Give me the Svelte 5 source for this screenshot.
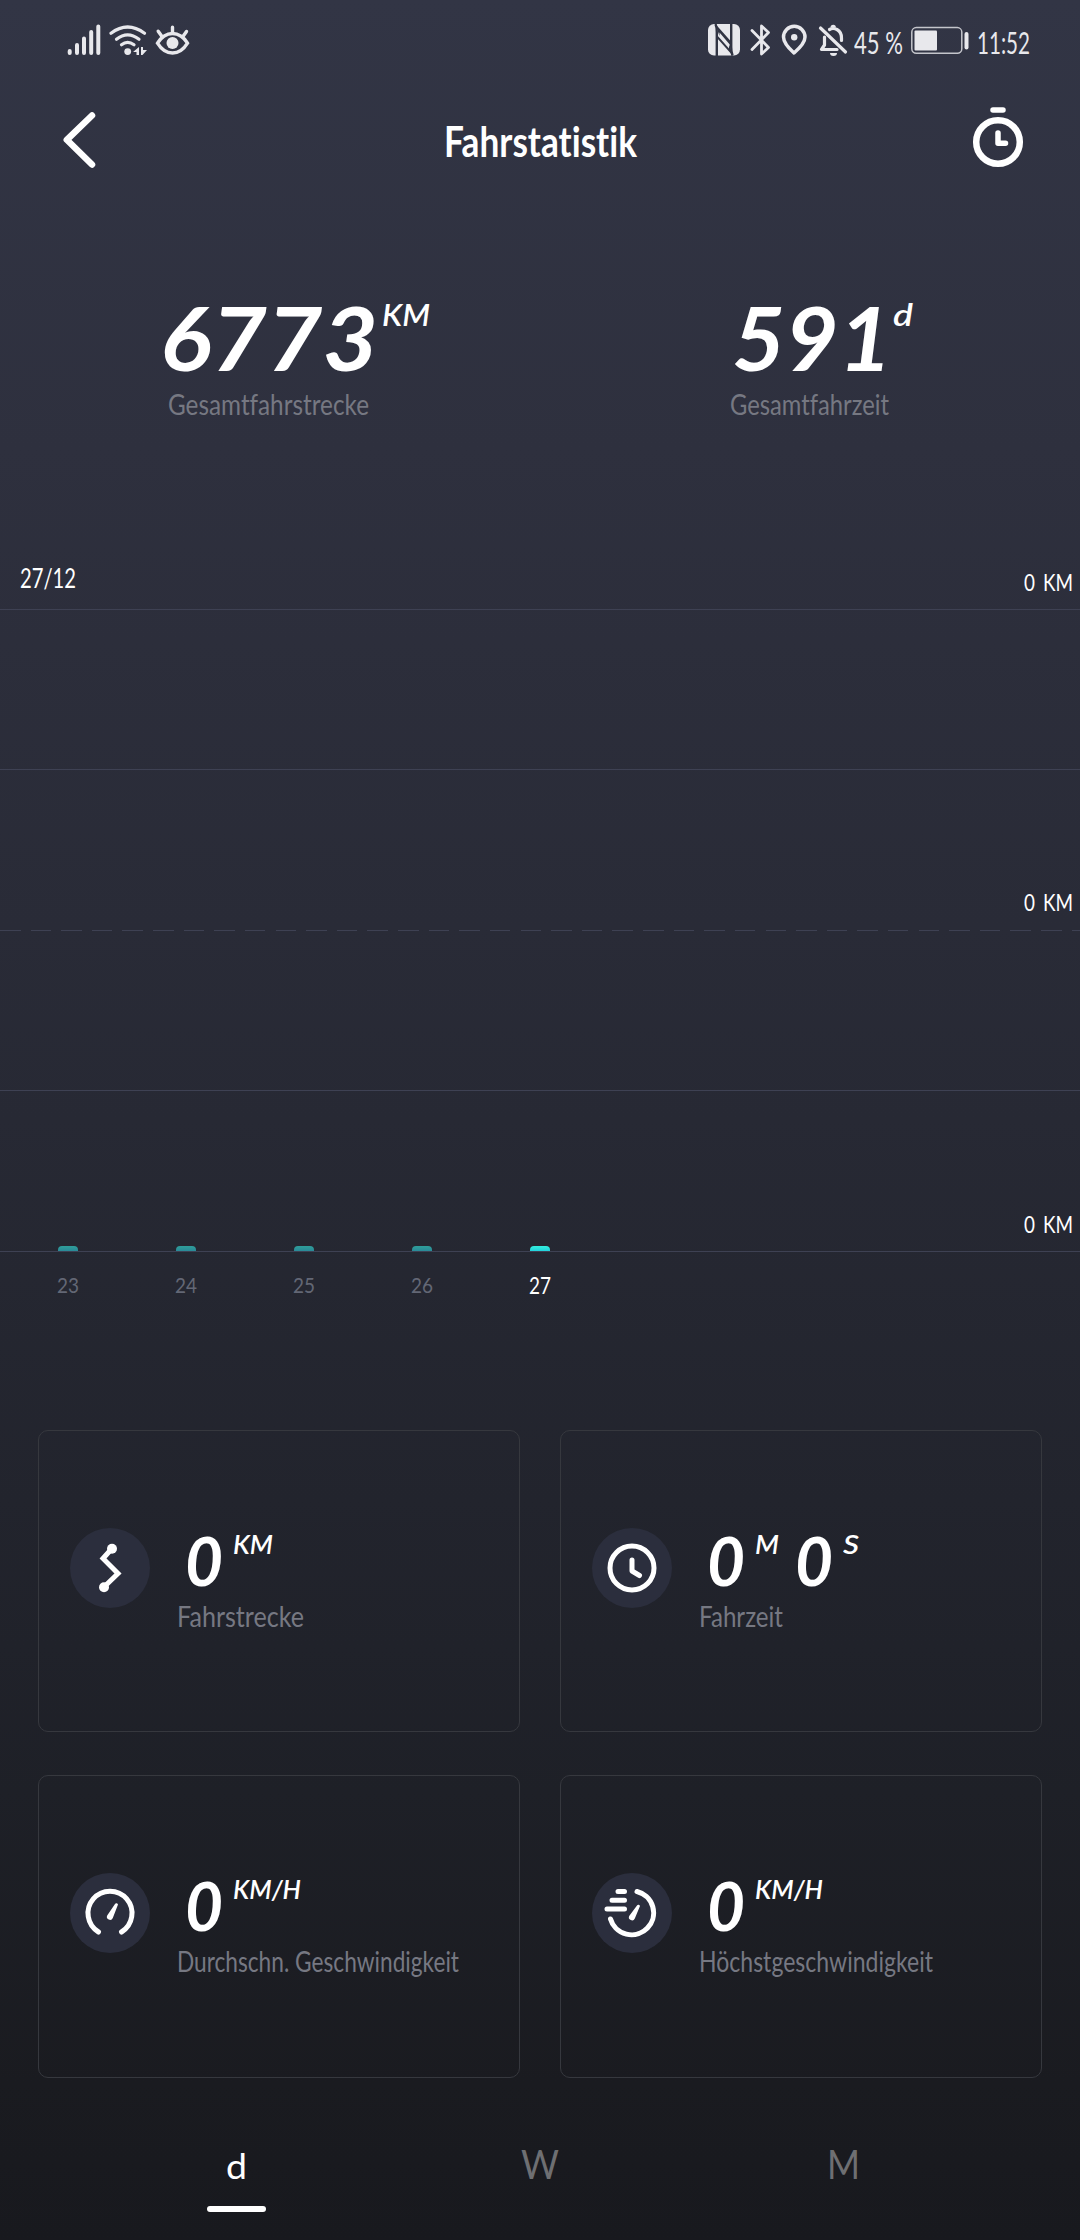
<script>
  // squeezes or stretches a piece of text to the width of the app's display face
  function fit(node, width) {
    const natural = node.getBoundingClientRect().width;
    node.style.transform = `scaleX(${width / natural})`;
    node.style.marginRight = `${width - natural}px`;
  }

  const totals = [
    { value: "6773", width: 218, unit: "KM", unitWidth: 48, label: "Gesamtfahrstrecke", labelWidth: 201 },
    { value: "591", width: 160, unit: "d", unitWidth: 20, label: "Gesamtfahrzeit", labelWidth: 159 },
  ];

  const days = ["23", "24", "25", "26", "27"];
  let selectedDay = "27";

  const cards = [
    { icon: "route", parts: [["KM", 40]], label: "Fahrstrecke", labelWidth: 127 },
    { icon: "clock", parts: [["M", 24], ["S", 16]], label: "Fahrzeit", labelWidth: 84 },
    { icon: "gauge", parts: [["KM/H", 68]], label: "Durchschn. Geschwindigkeit", labelWidth: 282 },
    { icon: "speed", parts: [["KM/H", 68]], label: "Höchstgeschwindigkeit", labelWidth: 234 },
  ];

  const tabs = [
    { name: "d", width: 21 },
    { name: "W", width: 38 },
    { name: "M", width: 33 },
  ];
  let selectedTab = "d";
</script>

<div class="screen">
  <div class="status">
    <svg class="status-left" width="126" height="40" viewBox="66 20 126 40">
      <g stroke="#e8e8ec" stroke-width="4" stroke-linecap="round">
        <path d="M69.700 51v2M77 45v8M84 38.500v14.500M91.200 32v21M98.300 26.500v26.500" />
      </g>
      <g fill="none" stroke="#e8e8ec" stroke-width="3.200" stroke-linecap="round">
        <path d="M111 33.200Q127.500 20.800 144.500 33.200" />
        <path d="M116.500 39.200Q127.500 30.500 139 39.200" />
        <path d="M121.500 44.800Q127.500 40 134 44.800" />
      </g>
      <circle cx="127.700" cy="51.600" r="3.400" fill="#e8e8ec" />
      <path d="M139 47v8h-2.500v-3H133zM141 47h2v3h4l-4.500 5H141z" fill="#e8e8ec" />
      <g fill="none" stroke="#e8e8ec" stroke-width="3.400" stroke-linecap="round">
        <path d="M157.500 43.200Q163.500 33.500 172.500 33.500T187.500 43.200Q181.500 53 172.500 53T157.500 43.200Z" />
        <path d="M172.500 27.200v5M158.200 31.200l3.600 5M186.500 31.500l-3.200 4.500" />
      </g>
      <circle cx="172.500" cy="43" r="6" fill="#e8e8ec" />
    </svg>

    <svg class="status-right" width="144" height="40" viewBox="704 20 144 40">
      <rect x="707" y="24" width="32" height="31.500" rx="6" fill="#e8e8ec" />
      <g fill="none" stroke="#313443" stroke-width="2.400">
        <path d="M714.500 24Q715.800 27 715.800 32V56" />
        <path d="M731.500 55.500Q730.200 52 730.200 47V24" />
      </g>
      <path d="M714 23.500L730 41.500V46L718.500 32.500V36zM732 56L716 38V35L728 48.500V44z" fill="#313443" />
      <path d="M751 30.500L767.500 47.500L760.500 54V26L767.500 32.500L751 49.500" fill="none" stroke="#e8e8ec" stroke-width="2.800" stroke-linejoin="round" stroke-linecap="round" />
      <path d="M793 53Q782.500 43.500 782.500 37A10.700 10.700 0 0 1 804 37Q804 43.500 793 53Z" fill="none" stroke="#e8e8ec" stroke-width="3.500" stroke-linejoin="round" />
      <circle cx="793.200" cy="37.200" r="3.200" fill="#e8e8ec" />
      <g fill="none" stroke="#e8e8ec" stroke-width="3.200" stroke-linecap="round" stroke-linejoin="round">
        <path d="M819.500 28L844.500 52" />
        <path d="M823.500 37v8l-3 4.500H836" />
        <path d="M828.500 29.500Q832 27.500 836 29.500Q840.500 32 840.500 38v2.500" />
      </g>
      <path d="M829.500 27.500a2.700 2.700 0 0 1 5.400 0M829 53h7a3.500 3 0 0 1-7 0z" fill="#e8e8ec" />
    </svg>

    <span class="status-text percent"><span class="fit" use:fit={49}>45 %</span></span>
    <svg class="battery" width="60" height="30" viewBox="910 25 60 30">
      <rect x="911.800" y="27.600" width="50" height="25.600" rx="4.500" fill="none" stroke="#c4c5cb" stroke-width="1.500" />
      <rect x="914.500" y="30.500" width="22.500" height="20" rx="1" fill="#e8e8ec" />
      <rect x="964.500" y="32" width="4" height="17.500" rx="2" fill="#e8e8ec" />
    </svg>
    <span class="status-text"><span class="fit" use:fit={53}>11:52</span></span>
  </div>

  <header>
    <svg width="40" height="64" viewBox="60 107 40 64">
      <path d="M92 114.500L66.800 138.800L92 163.500" fill="none" stroke="#fff" stroke-width="6.500" stroke-linecap="round" stroke-linejoin="round" />
    </svg>
    <h1><span class="fit" use:fit={193}>Fahrstatistik</span></h1>
    <svg width="54" height="64" viewBox="971 108 54 64" overflow="visible">
      <circle cx="998" cy="142" r="21.800" fill="none" stroke="#fff" stroke-width="6.500" />
      <path d="M993 110h10M998 133v10.200h7.500" fill="none" stroke="#fff" stroke-width="5.500" stroke-linecap="round" stroke-linejoin="round" />
    </svg>
  </header>

  <section class="totals">
    {#each totals as total}
      <div class="total">
        <div class="total-value">
          <span class="fit" use:fit={total.width}>{total.value}</span>
          <sup><span class="fit" use:fit={total.unitWidth}>{total.unit}</span></sup>
        </div>
        <div class="label"><span class="fit" use:fit={total.labelWidth}>{total.label}</span></div>
      </div>
    {/each}
  </section>

  <section class="chart">
    <div class="band head">
      <span class="date"><span class="fit" use:fit={56}>27/12</span></span>
      <span class="km"><span class="fit" use:fit={49}>0 KM</span></span>
    </div>
    <div class="band"></div>
    <div class="band dashed">
      <span class="km"><span class="fit" use:fit={49}>0 KM</span></span>
    </div>
    <div class="band"></div>
    <div class="band base">
      <span class="km"><span class="fit" use:fit={49}>0 KM</span></span>
      <div class="bars">
        {#each days as day}
          <i class:selected={day === selectedDay}></i>
        {/each}
      </div>
    </div>
    <div class="days">
      {#each days as day}
        <span class:selected={day === selectedDay}><b class="fit" use:fit={22}>{day}</b></span>
      {/each}
    </div>
  </section>

  <section class="cards">
    {#each cards as card}
      <div class="card">
        <svg class="icon" width="80" height="80" viewBox="-40 -40 80 80">
          <circle r="40" fill="#2b2e3d" />
          <g fill="none" stroke="#fff" stroke-width="5" stroke-linecap="round" stroke-linejoin="round">
            {#if card.icon === "route"}
              <path d="M1.500 -19L-7 -9.500L8 5.500L-6 19" stroke-linejoin="miter" />
              <circle cx="2" cy="-19.300" r="5" fill="#fff" stroke="none" />
              <circle cx="-6" cy="19.300" r="5" fill="#fff" stroke="none" />
            {:else if card.icon === "clock"}
              <circle r="22" />
              <path d="M0 -8V3L7.500 7.500" />
            {:else if card.icon === "gauge"}
              <path d="M-11.500 19A22 22 0 1 1 11.500 19" />
              <path d="M8 -8.500A1.600 1.600 0 0 0 5 -9L-2.800 2.500A3 3 0 1 0 2.800 5z" fill="#fff" stroke="none" />
            {:else}
              <path d="M5 -21.500A22 22 0 1 1 -21.500 6" />
              <path d="M-14 -21.500h6.500M-20 -12.800h12.500M-25 -4h17.500" />
              <path d="M8 -7A1.600 1.600 0 0 0 5 -7.500L-2.800 3A3 3 0 1 0 2.800 5.500z" fill="#fff" stroke="none" />
            {/if}
          </g>
        </svg>
        <div class="card-body">
          <div class="card-value">
            {#each card.parts as [unit, width]}
              <span class="fit" use:fit={38}>0</span>
              <sup><span class="fit" use:fit={width}>{unit}</span></sup>
            {/each}
          </div>
          <div class="label"><span class="fit" use:fit={card.labelWidth}>{card.label}</span></div>
        </div>
      </div>
    {/each}
  </section>

  <nav>
    {#each tabs as tab}
      <div class="tab" class:selected={tab.name === selectedTab}>
        <span class="fit" use:fit={tab.width}>{tab.name}</span>
        {#if tab.name === selectedTab}
          <i class="underline"></i>
        {/if}
      </div>
    {/each}
  </nav>
</div>

<style>
  :global(body) {
    background: #18191e;
  }

  .screen {
    width: 1080px;
    height: 2240px;
    overflow: hidden;
    display: flex;
    flex-direction: column;
    background: linear-gradient(#323545, #2e303e 20%, #272934 50%, #22242d 67%, #1e2027 80%, #1a1b20 93%, #18191e);
    color: #fff;
    font-family: Lato, "Open Sans", sans-serif;
    font-weight: 400;
    font-variant-ligatures: none;
  }

  .fit {
    display: inline-block;
    transform-origin: left;
    white-space: nowrap;
    font-weight: inherit;
  }

  /* status bar */
  .status {
    height: 80px;
    padding: 0 50px 0 66px;
    display: flex;
    align-items: center;
    box-sizing: border-box;
  }
  .status-right {
    margin-left: auto;
  }
  .status-text {
    font-size: 31px;
    line-height: 40px;
    color: #e8e8ec;
    padding-top: 3px;
  }
  .percent {
    margin-left: 5px;
  }
  .battery {
    margin: 0 7px 0 7px;
  }

  header {
    height: 120px;
    padding: 0 55px 0 60px;
    display: flex;
    justify-content: space-between;
    align-items: center;
    box-sizing: border-box;
  }
  h1 {
    margin: 0;
    padding: 2px 0 0 9px;
    font-size: 42px;
    line-height: 50px;
    font-weight: 700;
  }

  /* totals */
  .totals {
    height: 340px;
    padding: 91px 0 0 160px;
    display: grid;
    grid-template-columns: 572px 1fr;
    box-sizing: border-box;
  }
  .total-value {
    height: 96px;
    display: flex;
    align-items: flex-start;
    font-size: 88px;
    line-height: 92px;
    font-weight: 700;
    font-style: italic;
  }
  sup {
    font-size: 30px;
    line-height: 36px;
    font-weight: 600;
    vertical-align: baseline;
  }
  .total sup {
    padding: 5px 0 0 4px;
  }
  .total:last-child sup {
    padding-left: 1px;
  }
  .label {
    font-size: 28px;
    line-height: 34px;
    color: #767882;
  }
  .total .label {
    padding-left: 8px;
  }
  .total:last-child .label {
    padding-left: 0;
    margin-left: -2px;
  }

  /* chart */
  .chart {
    height: 890px;
  }
  .band {
    height: 160px;
    border-bottom: 1px solid #3e4153;
    display: flex;
    align-items: flex-end;
    justify-content: flex-end;
    box-sizing: border-box;
  }
  .head {
    height: 70px;
    justify-content: space-between;
  }
  .dashed {
    height: 161px;
    border-bottom: 0;
    background: repeating-linear-gradient(90deg, #3e4153 0 20.500px, transparent 20.500px 30.620px) bottom / 100% 1px no-repeat;
  }
  .date {
    font-size: 26px;
    line-height: 30px;
    padding: 0 0 16px 20px;
  }
  .km {
    font-size: 23.500px;
    line-height: 26px;
    word-spacing: 4px;
    padding: 0 7px 14px 0;
  }
  .dashed .km {
    padding-bottom: 16px;
  }
  .base {
    height: 161px;
    flex-direction: column;
    align-items: stretch;
  }
  .base .km {
    align-self: flex-end;
    padding-bottom: 9px;
  }
  .bars,
  .days {
    display: grid;
    grid-template-columns: repeat(5, 118px);
    justify-items: center;
    padding-left: 9px;
  }
  .bars i {
    width: 20px;
    height: 5px;
    border-radius: 4px 4px 0 0;
    background: linear-gradient(#2f9e9a, #2a8a98);
  }
  .bars i.selected {
    background: linear-gradient(#35eedd, #22d3dc);
  }
  .days {
    padding-top: 19px;
    font-size: 21px;
    line-height: 28px;
    color: #636775;
  }
  .days .selected {
    font-size: 23px;
    color: #fff;
  }

  /* cards */
  .cards {
    display: grid;
    grid-template-columns: 482px 482px;
    grid-template-rows: 302px 303px;
    gap: 43px 40px;
    padding-left: 38px;
  }
  .card {
    border: 1px solid #36383e;
    border-radius: 10px;
    padding: 97px 0 0 31px;
    display: flex;
    align-items: flex-start;
    box-sizing: border-box;
  }
  .card-body {
    padding-left: 27px;
    margin-top: -2px;
  }
  .card-value {
    height: 73px;
    display: flex;
    align-items: flex-start;
    padding-left: 8px;
    font-size: 66px;
    line-height: 70px;
    font-weight: 700;
    font-style: italic;
  }
  .card sup {
    font-size: 26px;
    line-height: 32px;
    padding: 2px 16px 0 10px;
  }

  nav {
    height: 141px;
    padding: 61px 85px 0;
    display: grid;
    grid-template-columns: repeat(3, 1fr);
    justify-items: center;
    box-sizing: border-box;
  }
  .tab {
    display: flex;
    flex-direction: column;
    align-items: center;
    font-size: 40px;
    line-height: 50px;
    color: #6e6f72;
  }
  .selected.tab {
    color: #fff;
    font-size: 35px;
    line-height: 52px;
  }
  .underline {
    width: 59px;
    height: 6px;
    margin-top: 15px;
    border-radius: 3px;
    background: #fff;
  }
</style>
